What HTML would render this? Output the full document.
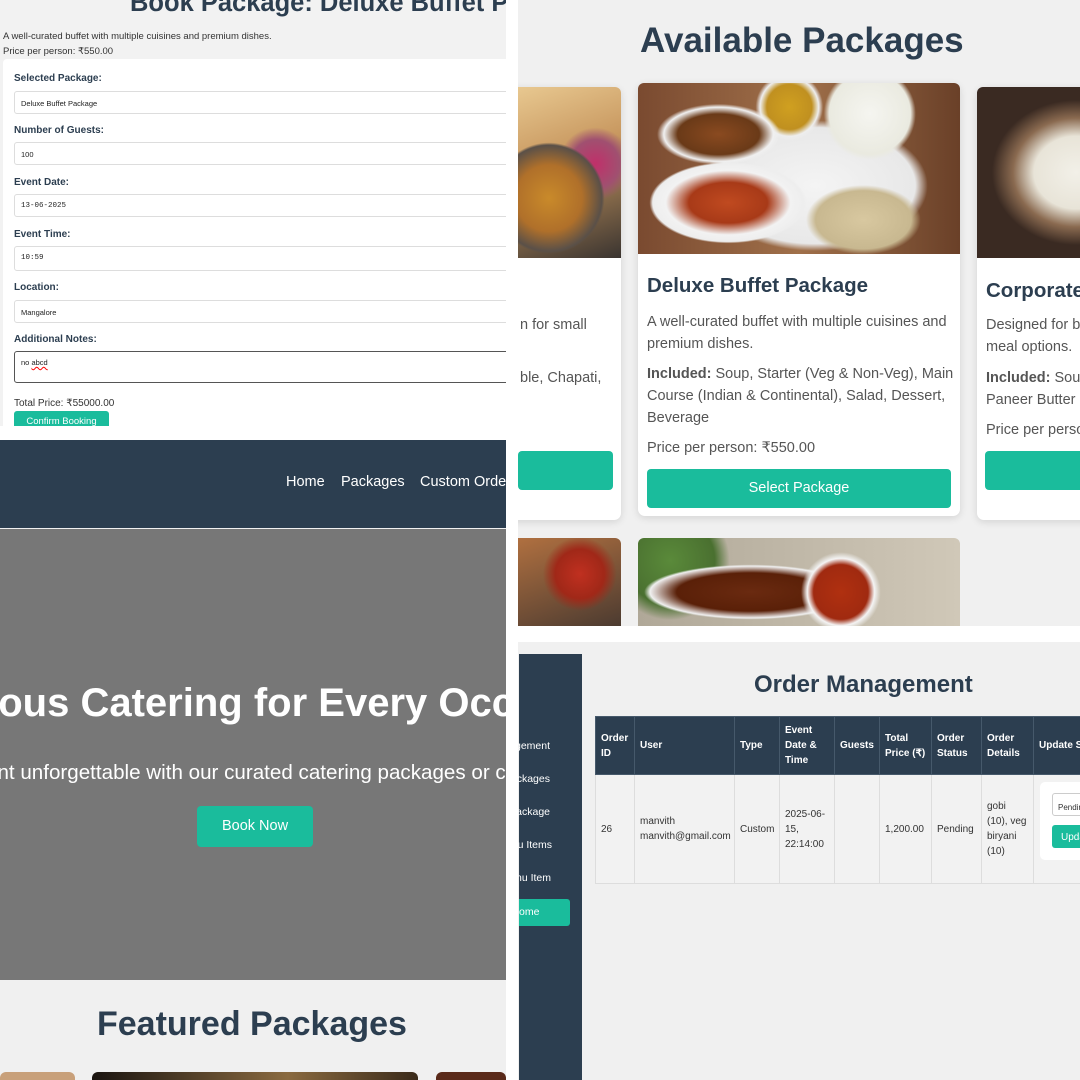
<!DOCTYPE html>
<html><head><meta charset="utf-8"><style>
*{margin:0;padding:0;box-sizing:border-box}
body{width:1080px;height:1080px;position:relative;overflow:hidden;background:#fff;font-family:"Liberation Sans",Arial,sans-serif;color:#333}
.a{position:absolute}
.p{position:absolute;overflow:hidden}
.lbl{position:absolute;left:14px;font-size:10px;font-weight:bold;color:#2c3e50}
.inp{position:absolute;left:14px;width:520px;height:23px;border:1px solid #ddd;border-radius:3px;background:#fff;font-size:7.5px;padding:7px 6px;color:#222}
.mono{font-family:"Liberation Mono",monospace}
.nw{white-space:nowrap}
.img{position:absolute;border-radius:6px 6px 0 0}
.card{position:absolute;background:#fff;border-radius:7px;box-shadow:0 2px 8px rgba(0,0,0,.12)}
th,td{border:1px solid #ddd;font-size:10px;text-align:left;padding:0 5px;vertical-align:middle;line-height:15px}
th{background:#2c3e50;color:#fff;font-weight:bold;border-color:#46596b}
td{color:#333;background:#f2f2f2}
.sb{position:absolute;right:530px;font-size:10.5px;color:#fff;white-space:nowrap}
</style></head><body>

<!-- Top-left: booking -->
<div class="p" style="left:0;top:0;width:506px;height:426px;background:#f2f2f2">
  <div class="a nw" style="left:130px;top:-11px;font-size:25.5px;font-weight:bold;color:#2c3e50">Book Package: Deluxe Buffet Package</div>
  <div class="a nw" style="left:3px;top:31px;font-size:9.5px;color:#333">A well-curated buffet with multiple cuisines and premium dishes.</div>
  <div class="a nw" style="left:3px;top:46px;font-size:9.5px;color:#333">Price per person: ₹550.00</div>
  <div class="a" style="left:3px;top:59px;width:520px;height:380px;background:#fff;border-radius:4px"></div>
  <div class="lbl" style="top:73px">Selected Package:</div>
  <div class="inp" style="top:91px">Deluxe Buffet Package</div>
  <div class="lbl" style="top:125px">Number of Guests:</div>
  <div class="inp" style="top:142px">100</div>
  <div class="lbl" style="top:177px">Event Date:</div>
  <div class="inp mono" style="top:194px">13-06-2025</div>
  <div class="lbl" style="top:229px">Event Time:</div>
  <div class="inp mono" style="top:246px;height:25px">10:59</div>
  <div class="lbl" style="top:282px">Location:</div>
  <div class="inp" style="top:300px">Mangalore</div>
  <div class="lbl" style="top:334px">Additional Notes:</div>
  <div class="inp" style="top:351px;height:32px;border:1.5px solid #555;padding-top:6px">no <span style="text-decoration:underline wavy red">abcd</span></div>
  <div class="a nw" style="left:14px;top:398px;font-size:10px;color:#333">Total Price: ₹55000.00</div>
  <div class="a nw" style="left:14px;top:411px;width:95px;height:20px;background:#1abc9c;border-radius:3px;color:#fff;font-size:9.5px;text-align:center;line-height:22px">Confirm Booking</div>
</div>

<!-- Bottom-left: home -->
<div class="p" style="left:0;top:440px;width:506px;height:640px;background:#f0f0f0">
  <div class="a" style="left:0;top:0;width:506px;height:88px;background:#2c3e50"></div>
  <div class="a nw" style="left:286px;top:34px;font-size:14.5px;color:#fff">Home</div>
  <div class="a nw" style="left:341px;top:34px;font-size:14.5px;color:#fff">Packages</div>
  <div class="a nw" style="left:420px;top:34px;font-size:14.5px;color:#fff">Custom Orders</div>
  <div class="a" style="left:0;top:89px;width:506px;height:451px;background:#777"></div>
  <div class="a nw" style="left:-400px;width:1310px;text-align:center;top:241px;font-size:40px;font-weight:bold;color:#fff">Delicious Catering for Every Occasion</div>
  <div class="a nw" style="left:-508px;width:1510px;text-align:center;top:321px;font-size:20.6px;color:#fff">Make your event unforgettable with our curated catering packages or custom orders.</div>
  <div class="a" style="left:197px;top:366px;width:116px;height:41px;background:#1abc9c;border-radius:4px;color:#fff;font-size:14.5px;text-align:center;line-height:41px">Book Now</div>
  <div class="a nw" style="left:97px;top:565px;font-size:34px;font-weight:bold;color:#2c3e50">Featured Packages</div>
  <div class="a" style="left:0;top:632px;width:75px;height:20px;background:#c8a07a;border-radius:6px"></div>
  <div class="a" style="left:92px;top:632px;width:326px;height:20px;background:linear-gradient(90deg,#1a1410,#8a6a40 60%,#3a2a1a);border-radius:6px"></div>
  <div class="a" style="left:436px;top:632px;width:70px;height:20px;background:#5a2a1a;border-radius:6px"></div>
</div>

<!-- Top-right: packages -->
<div class="p" style="left:518px;top:0;width:562px;height:626px;background:#f0f0f0">
  <div class="a nw" style="left:122px;top:21px;font-size:35px;font-weight:bold;color:#2c3e50">Available Packages</div>
  <div class="card" style="left:-220px;top:87px;width:323px;height:433px"></div>
  <div class="img" style="left:0;top:87px;width:103px;height:171px;border-radius:0 6px 0 0;background:radial-gradient(circle at 30% 65%,#c98a2a 0,#b0702a 25%,#5a5048 40%,transparent 42%),radial-gradient(circle at 75% 45%,#c0306a 0,#a05070 20%,transparent 30%),linear-gradient(160deg,#e8c890,#c89860 40%,#3a3430)"></div>
  <div class="a nw" style="left:2px;top:317px;font-size:14.5px;color:#555">n for small</div>
  <div class="a nw" style="left:2px;top:370px;font-size:14.5px;color:#555">ble, Chapati,</div>
  <div class="a" style="left:0;top:451px;width:95px;height:39px;background:#1abc9c;border-radius:4px"></div>

  <div class="card" style="left:120px;top:83px;width:322px;height:433px"></div>
  <div class="img" style="left:120px;top:83px;width:322px;height:171px;background:radial-gradient(ellipse at 28% 70%,#c04a20 0,#a83a18 12%,#f2f2f2 19%,#eee 23%,transparent 24%),radial-gradient(ellipse at 25% 30%,#8a4a20 0,#6a3a18 12%,#f0f0f0 16%,transparent 18%),radial-gradient(circle at 47% 14%,#d0a020 0,#c09020 10%,#eee 13%,transparent 15%),radial-gradient(circle at 72% 18%,#f5f5f0 0,#eaeae0 15%,transparent 17%),radial-gradient(ellipse at 70% 80%,#d8c8a0 0,#c8b890 15%,transparent 18%),radial-gradient(ellipse at 55% 60%,#f4f4f4 0,#e8e8e8 40%,transparent 45%),linear-gradient(90deg,#7a4a30,#a0704a 50%,#6a4028)"></div>
  <div class="a nw" style="left:129px;top:274px;font-size:20.5px;font-weight:bold;color:#2c3e50">Deluxe Buffet Package</div>
  <div class="a" style="left:129px;top:311px;width:300px;font-size:14.5px;line-height:22px;color:#555">A well-curated buffet with multiple cuisines and premium dishes.</div>
  <div class="a" style="left:129px;top:363px;width:312px;font-size:14.5px;line-height:22px;color:#555"><b>Included:</b> Soup, Starter (Veg &amp; Non-Veg), Main Course (Indian &amp; Continental), Salad, Dessert, Beverage</div>
  <div class="a nw" style="left:129px;top:440px;font-size:14.5px;color:#555">Price per person: ₹550.00</div>
  <div class="a" style="left:129px;top:469px;width:304px;height:39px;background:#1abc9c;border-radius:4px;color:#fff;font-size:14.5px;text-align:center;line-height:39px">Select Package</div>

  <div class="card" style="left:459px;top:87px;width:323px;height:433px"></div>
  <div class="img" style="left:459px;top:87px;width:110px;height:171px;border-radius:6px 0 0 0;background:radial-gradient(ellipse at 90% 50%,#f2f0e8 0,#e8e4d8 30%,#8a6a50 45%,#3a2a22 60%),#2a201a"></div>
  <div class="a nw" style="left:468px;top:279px;font-size:20.5px;font-weight:bold;color:#2c3e50">Corporate Package</div>
  <div class="a nw" style="left:468px;top:317px;font-size:14.5px;color:#555">Designed for business events</div>
  <div class="a nw" style="left:468px;top:339px;font-size:14.5px;color:#555">meal options.</div>
  <div class="a nw" style="left:468px;top:370px;font-size:14.5px;color:#555"><b>Included:</b> Soup</div>
  <div class="a nw" style="left:468px;top:392px;font-size:14.5px;color:#555">Paneer Butter Masala</div>
  <div class="a nw" style="left:468px;top:422px;font-size:14.5px;color:#555">Price per person</div>
  <div class="a" style="left:467px;top:451px;width:120px;height:39px;background:#1abc9c;border-radius:4px"></div>

  <div class="img" style="left:0;top:538px;width:103px;height:90px;border-radius:0 6px 0 0;background:radial-gradient(circle at 60% 40%,#c03020 0,#a02818 30%,transparent 45%),linear-gradient(160deg,#b07040,#4a3a30)"></div>
  <div class="img" style="left:120px;top:538px;width:322px;height:90px;background:radial-gradient(circle at 63% 60%,#b03010 0,#a02a10 13%,#f4f4f4 16%,transparent 19%),radial-gradient(ellipse at 35% 60%,#6a2a10 0,#5a2008 25%,#f0f0f0 34%,transparent 36%),radial-gradient(circle at 10% 25%,#5a8a3a 0,#4a7030 15%,transparent 20%),linear-gradient(90deg,#b0a898,#d0c8b8)"></div>
</div>

<!-- Bottom-right: orders -->
<div class="p" style="left:518px;top:642px;width:562px;height:438px;background:#f0f0f0">
  <div class="a" style="left:1px;top:12px;width:63px;height:430px;background:#2c3e50"></div>
  <div class="sb" style="top:98px">Order Management</div>
  <div class="sb" style="top:131px">Manage Packages</div>
  <div class="sb" style="top:164px">Add Package</div>
  <div class="sb" style="top:197px;right:528px">Manage Menu Items</div>
  <div class="sb" style="top:230px;right:529px">Add Menu Item</div>
  <div class="a" style="left:1px;top:257px;width:51px;height:27px;background:#1abc9c;border-radius:0 3px 3px 0;color:#fff;font-size:10.5px;line-height:27px">ome</div>
  <div class="a nw" style="left:236px;top:29px;font-size:24px;font-weight:bold;color:#2c3e50">Order Management</div>
  <table class="a" style="left:77px;top:74px;border-collapse:collapse;width:520px;table-layout:fixed">
    <colgroup><col style="width:39px"><col style="width:100px"><col style="width:45px"><col style="width:55px"><col style="width:45px"><col style="width:52px"><col style="width:50px"><col style="width:52px"><col style="width:82px"></colgroup>
    <tr style="height:58px"><th>Order ID</th><th>User</th><th>Type</th><th>Event Date &amp; Time</th><th>Guests</th><th>Total Price (₹)</th><th>Order Status</th><th>Order Details</th><th class="nw">Update Status</th></tr>
    <tr style="height:109px"><td>26</td><td>manvith<br>manvith@gmail.com</td><td>Custom</td><td>2025-06-15,<br>22:14:00</td><td></td><td>1,200.00</td><td>Pending</td><td>gobi (10), veg biryani (10)</td>
    <td style="position:relative"><div class="a" style="left:6px;top:7px;width:90px;height:78px;background:#fff;border-radius:5px"></div><div class="a" style="left:18px;top:18px;width:60px;height:23px;border:1px solid #ccc;border-radius:3px;font-size:8px;padding:6px 5px">Pending</div><div class="a" style="left:18px;top:50px;width:60px;height:23px;background:#1abc9c;border-radius:3px;color:#fff;font-size:10px;padding:5px 9px">Update</div></td></tr>
  </table>
</div>
</body></html>
